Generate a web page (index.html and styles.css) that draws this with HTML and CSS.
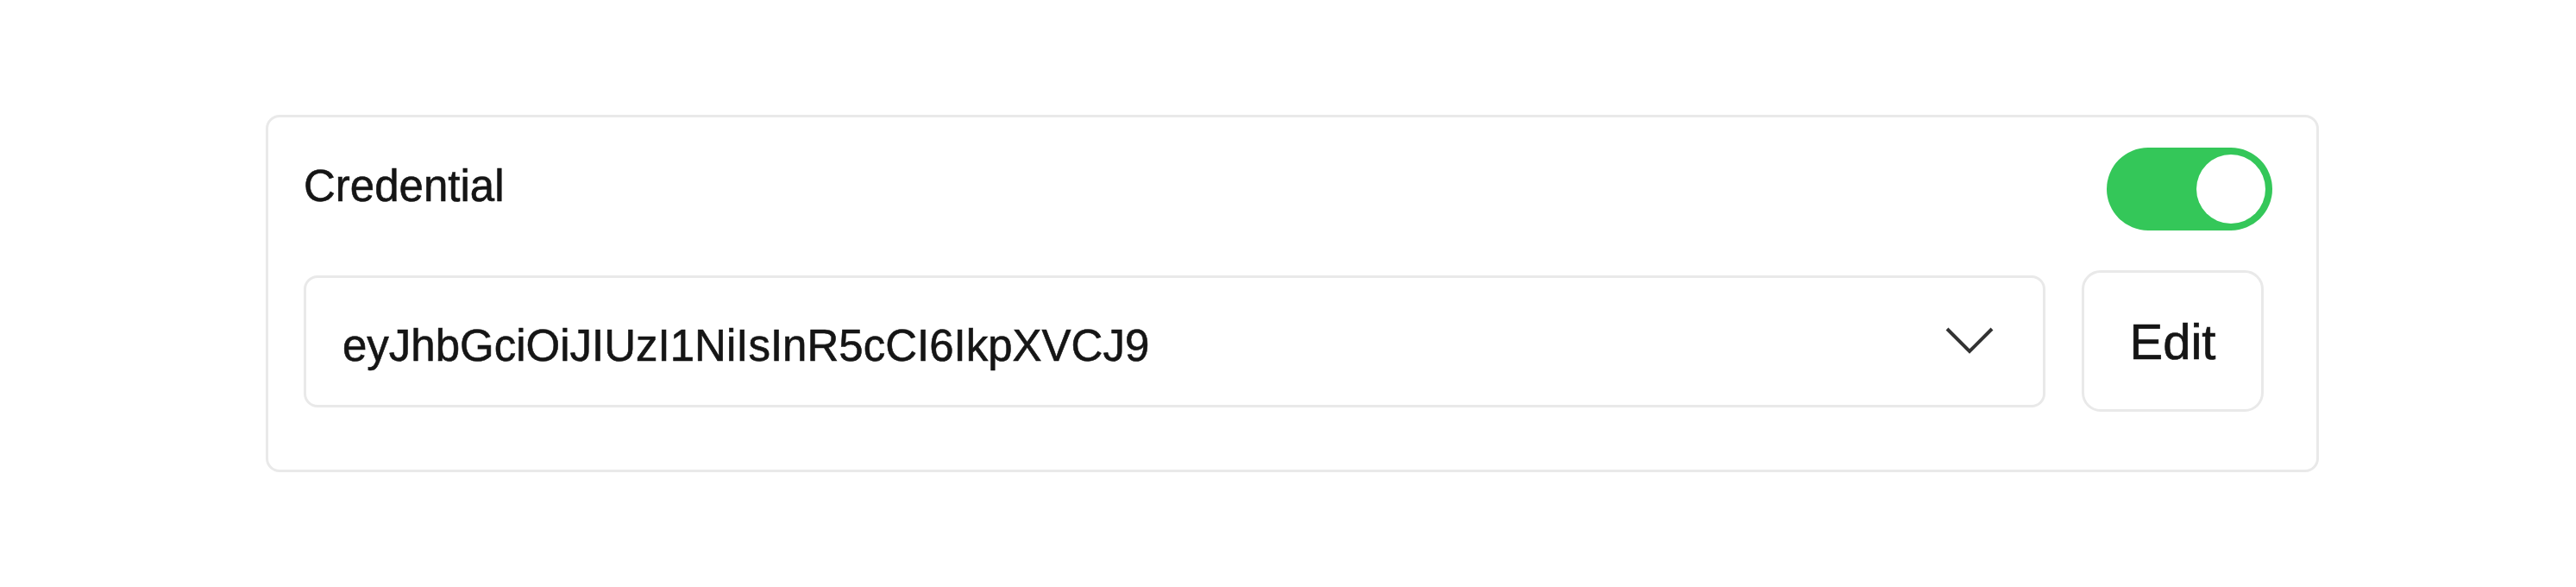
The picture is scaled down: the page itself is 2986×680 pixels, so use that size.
FILE: index.html
```html
<!DOCTYPE html>
<html lang="en">
<head>
  <meta charset="UTF-8">
  <meta name="viewport" content="width=device-width, initial-scale=1.0">
  <title>Credential</title>
  <link rel="stylesheet" href="styles.css">
</head>
<body>

  <div class="page">
    <div class="card">
      <!-- Header: label and switch -->
      <div class="card-header">
        <span class="label">Credential</span>
        <div class="toggle on">
          <div class="knob"></div>
        </div>
      </div>

      <!-- Token select and edit button -->
      <div class="field-row">
        <div class="select">
          <span class="select-value">eyJhbGciOiJIUzI1NiIsInR5cCI6IkpXVCJ9</span>
          <svg class="chevron" width="56" height="32" viewBox="0 0 56 32">
            <polyline points="2,2 28,28 54,2" fill="none" stroke="#333" stroke-width="4"/>
          </svg>
        </div>
        <button type="button" class="btn">Edit</button>
      </div>
    </div>
  </div>

</body>
</html>
```

FILE: styles.css
```css
body {
  font-family: "Liberation Sans", Arial, sans-serif;
  margin: 0;
  padding: 0;
  background-color: #fff;
  color: #151515;
}
.page {
  padding: 133px 0 0 308px;
}
.card {
  width: 2380px;
  box-sizing: border-box;
  border: 3px solid #e9e9e9;
  border-radius: 16px;
  padding: 35px 51px 67px 41px;
}
.card-header {
  display: flex;
  justify-content: space-between;
  align-items: center;
}
.label {
  font-size: 51px;
  margin-bottom: 8px;
  -webkit-text-stroke: 0.6px #151515;
}
.toggle {
  width: 192px;
  height: 96px;
  border-radius: 48px;
  background-color: #e5e5ea;
  display: flex;
  align-items: center;
  padding: 8px;
  box-sizing: border-box;
}
.toggle.on {
  background-color: #34c759;
  justify-content: flex-end;
}
.knob {
  width: 80px;
  height: 80px;
  border-radius: 50%;
  background-color: #fff;
}
.field-row {
  display: flex;
  align-items: center;
  gap: 42px;
  margin-top: 46px;
  margin-right: 10px;
}
.select {
  flex: 1;
  height: 153px;
  box-sizing: border-box;
  border: 3px solid #e9e9e9;
  border-radius: 16px;
  display: flex;
  align-items: center;
  justify-content: space-between;
  padding: 10px 57px 0 42px;
}
.select-value {
  font-size: 51px;
  -webkit-text-stroke: 0.6px #151515;
}
.chevron {
  margin-top: -10px;
}
.btn {
  width: 211px;
  height: 164px;
  background-color: #fff;
  border: 3px solid #e9e9e9;
  border-radius: 22px;
  font-family: "Liberation Sans", Arial, sans-serif;
  font-size: 58px;
  color: #151515;
  -webkit-text-stroke: 0.7px #151515;
  padding: 0;
  cursor: pointer;
}
```
